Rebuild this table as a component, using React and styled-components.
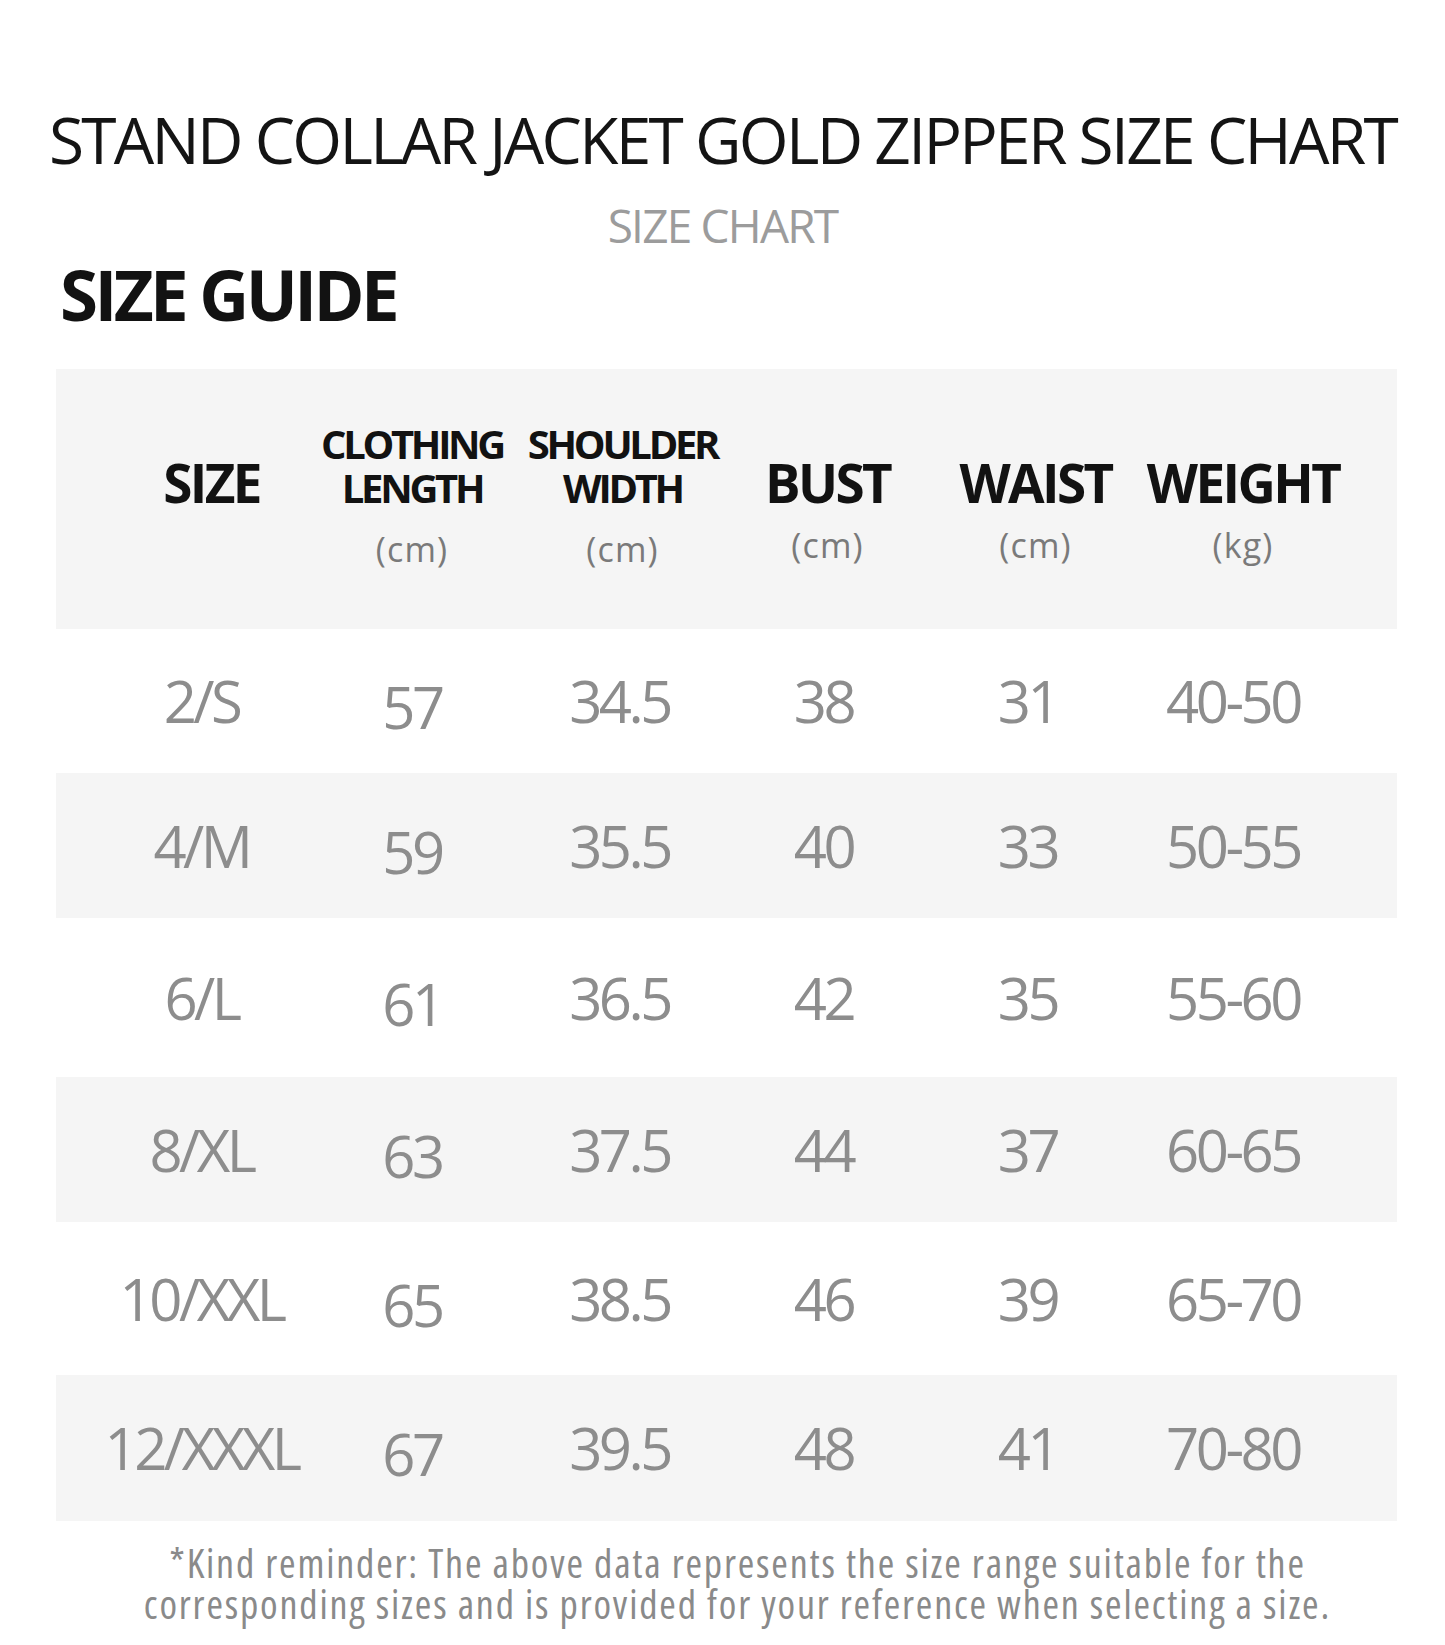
import React from 'react';
import styled, {createGlobalStyle} from 'styled-components';

const GlobalStyle = createGlobalStyle`
  html, body {
    margin: 0;
    padding: 0;
    background: #ffffff;
  }
  body {
    font-family: "Open Sans", "Noto Sans", "Liberation Sans", sans-serif;
  }
`;

const Page = styled.div`
  width: 1445px;
  height: 1645px;
  padding-top: 106px;
  box-sizing: border-box;
  background: #fff;
  overflow: hidden;
`;

const Title = styled.h1`
  margin: 0;
  text-align: center;
  font-size: 64px;
  line-height: 67px;
  font-weight: 500;
  letter-spacing: -2.7px;
  white-space: nowrap;
  color: #141414;
`;

const SubTitle = styled.div`
  margin-top: 28px;
  text-align: center;
  font-size: 46px;
  line-height: 48px;
  letter-spacing: -1.8px;
  color: #9c9c9c;
`;

const Guide = styled.h2`
  margin: 10px 0 0 60px;
  font-size: 69px;
  line-height: 71px;
  font-weight: 700;
  letter-spacing: -3.6px;
  color: #121212;
`;

const Table = styled.div`
  margin: 39px 48px 0 56px;
`;

const Row = styled.div`
  display: grid;
  grid-template-columns: 211px 210px 205px 203px 205px 206px;
  padding-left: 40px;
  height: ${p => p.$height}px;
  background: ${p => p.$shade ? '#f5f5f5' : '#ffffff'};
  align-items: center;
`;

const HeadCell = styled.div`
  align-self: stretch;
  display: flex;
  flex-direction: column;
  align-items: center;
  padding-left: ${p => p.$offset || 0}px;
`;

const HeadTitle = styled.div`
  height: 141px;
  display: flex;
  flex-direction: column;
  justify-content: flex-end;
  align-items: center;
  font-weight: 700;
  color: #121212;
  font-size: ${p => p.$big ? 53 : 40}px;
  line-height: ${p => p.$big ? 54 : 44}px;
  letter-spacing: ${p => p.$big ? -2.6 : -3.3}px;
  white-space: nowrap;
`;

const Unit = styled.div`
  margin-top: ${p => p.$low ? 22 : 18}px;
  font-size: 34px;
  line-height: 34px;
  letter-spacing: 1.2px;
  color: #7a7a7a;
`;

const Cell = styled.div`
  text-align: center;
  font-size: 58px;
  line-height: 60px;
  letter-spacing: -3.5px;
  color: #8d8d8d;
  white-space: nowrap;
  padding-top: ${p => p.$low ? 12 : 0}px;
`;

const Note = styled.p`
  margin: 21px 0 0;
  padding-left: 30px;
  text-align: center;
  font-size: 40px;
  line-height: 41px;
  font-stretch: 80%;
  letter-spacing: 1.8px;
  white-space: nowrap;
  color: #8a8a8a;
`;

const columns = [
  {label: ['SIZE'], big: true, offset: 20},
  {label: ['CLOTHING', 'LENGTH'], unit: '(cm)'},
  {label: ['SHOULDER', 'WIDTH'], unit: '(cm)', offset: 6},
  {label: ['BUST'], unit: '(cm)', big: true, offset: 8},
  {label: ['WAIST'], unit: '(cm)', big: true, offset: 16},
  {label: ['WEIGHT'], unit: '(kg)', big: true, offset: 20},
];

const rows = [
  {height: 144, values: ['2/S', '57', '34.5', '38', '31', '40-50']},
  {height: 145, values: ['4/M', '59', '35.5', '40', '33', '50-55']},
  {height: 159, values: ['6/L', '61', '36.5', '42', '35', '55-60']},
  {height: 145, values: ['8/XL', '63', '37.5', '44', '37', '60-65']},
  {height: 153, values: ['10/XXL', '65', '38.5', '46', '39', '65-70']},
  {height: 146, values: ['12/XXXL', '67', '39.5', '48', '41', '70-80']},
];

export default function App() {
  return (
    <Page>
      <GlobalStyle/>
      <Title>STAND COLLAR JACKET GOLD ZIPPER SIZE CHART</Title>
      <SubTitle>SIZE CHART</SubTitle>
      <Guide>SIZE GUIDE</Guide>
      <Table>
        <Row $height={260} $shade>
          {columns.map(col => (
            <HeadCell key={col.label[0]} $offset={col.offset}>
              <HeadTitle $big={col.big}>
                {col.label.map(line => <span key={line}>{line}</span>)}
              </HeadTitle>
              {col.unit && <Unit $low={!col.big}>{col.unit}</Unit>}
            </HeadCell>
          ))}
        </Row>
        {rows.map((row, i) => (
          <Row key={row.values[0]} $height={row.height} $shade={i % 2 === 1}>
            {row.values.map((value, j) => <Cell key={j} $low={j === 1}>{value}</Cell>)}
          </Row>
        ))}
      </Table>
      <Note>
        *Kind reminder: The above data represents the size range suitable for the<br/>
        corresponding sizes and is provided for your reference when selecting a size.
      </Note>
    </Page>
  );
}
